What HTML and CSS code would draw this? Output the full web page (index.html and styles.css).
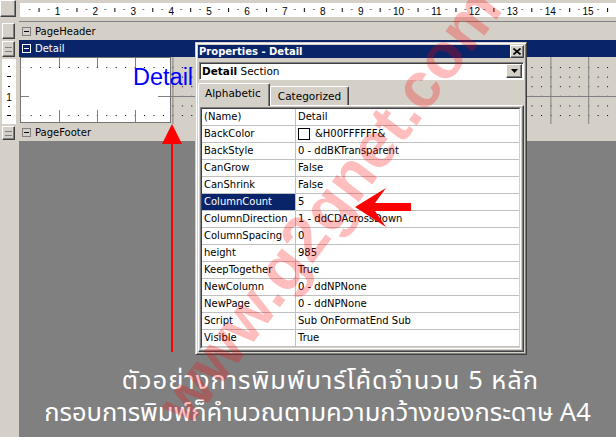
FILE: index.html
```html
<!DOCTYPE html>
<html lang="th">
<head>
  <meta charset="UTF-8" />
  <title>Report Designer - Properties</title>
  <link rel="stylesheet" href="styles.css">
</head>
<body>

<!-- ruler row -->
<div class="top">
  <div class="corner raised"></div>
  <div class="hruler">
    <svg width="596" height="14" viewBox="0 0 596 14">
      <defs>
        <pattern id="rtick" patternUnits="userSpaceOnUse" x="-0.4" y="0" width="37.9" height="14">
          <rect x="9.5" y="6" width="1" height="1" fill="#000"/>
          <rect x="19" y="5" width="1" height="4" fill="#000"/>
          <rect x="28.4" y="6" width="1" height="1" fill="#000"/>
        </pattern>
      </defs>
      <rect x="0" y="0" width="596" height="14" fill="url(#rtick)"/>
      <g class="rnum">
        <text x="37.5" y="11.5">1</text>
        <text x="75.4" y="11.5">2</text>
        <text x="113.3" y="11.5">3</text>
        <text x="151.2" y="11.5">4</text>
        <text x="189.1" y="11.5">5</text>
        <text x="227" y="11.5">6</text>
        <text x="264.9" y="11.5">7</text>
        <text x="302.8" y="11.5">8</text>
        <text x="340.7" y="11.5">9</text>
        <text x="378.6" y="11.5">10</text>
        <text x="416.5" y="11.5">11</text>
        <text x="454.4" y="11.5">12</text>
        <text x="492.3" y="11.5">13</text>
        <text x="530.2" y="11.5">14</text>
        <text x="568.1" y="11.5">15</text>
      </g>
    </svg>
  </div>
</div>

<div class="body">
  <!-- left section handles -->
  <div class="side">
    <div class="sbtn raised"></div>
    <div class="sbtn raised grip"></div>
    <div class="vruler">
      <svg width="14" height="65" viewBox="0 0 14 65">
        <rect x="6" y="7" width="2" height="1" fill="#000"/>
        <rect x="5" y="17" width="4" height="1" fill="#000"/>
        <rect x="6" y="27" width="2" height="1" fill="#000"/>
        <text x="7" y="42" class="rnum">1</text>
        <rect x="6" y="47" width="2" height="1" fill="#000"/>
        <rect x="5" y="56" width="4" height="1" fill="#000"/>
      </svg>
    </div>
    <div class="sbtn raised grip short"></div>
  </div>

  <div class="main">
    <div class="band">
      <span class="fold"></span>PageHeader
    </div>
    <div class="band band-sel">
      <span class="fold"></span>Detail
    </div>

    <!-- detail section design surface -->
    <div class="surface">
      <svg width="597" height="67" viewBox="0 0 597 67">
        <defs>
          <pattern id="dots" patternUnits="userSpaceOnUse" x="2.2" y="0.4" width="9.45" height="9.6">
            <rect x="0" y="0" width="1" height="1" fill="#000"/>
          </pattern>
        </defs>
        <rect x="152" y="5" width="445" height="62" fill="url(#dots)"/>
        <g stroke="#808080" stroke-width="1">
          <line x1="152" y1="39.5" x2="597" y2="39.5"/>
          <line x1="153.9" y1="0" x2="153.9" y2="67"/>
          <line x1="191.7" y1="0" x2="191.7" y2="67"/>
          <line x1="229.5" y1="0" x2="229.5" y2="67"/>
          <line x1="267.3" y1="0" x2="267.3" y2="67"/>
          <line x1="305.1" y1="0" x2="305.1" y2="67"/>
          <line x1="342.9" y1="0" x2="342.9" y2="67"/>
          <line x1="380.7" y1="0" x2="380.7" y2="67"/>
          <line x1="418.5" y1="0" x2="418.5" y2="67"/>
          <line x1="456.3" y1="0" x2="456.3" y2="67"/>
          <line x1="494.1" y1="0" x2="494.1" y2="67"/>
          <line x1="531.9" y1="0" x2="531.9" y2="67"/>
          <line x1="569.7" y1="0" x2="569.7" y2="67"/>
        </g>

        <!-- selected white control -->
        <rect x="1.5" y="0.5" width="150" height="65" fill="#fff" stroke="#000" stroke-dasharray="1 1"/>
        <rect x="3" y="8" width="148" height="4" fill="url(#dots)"/>
        <rect x="3" y="56" width="148" height="4" fill="url(#dots)"/>
        <g stroke="#808080" stroke-width="1">
          <line x1="40.5" y1="1" x2="40.5" y2="10"/>
          <line x1="78.5" y1="1" x2="78.5" y2="10"/>
          <line x1="116.5" y1="1" x2="116.5" y2="10"/>
          <line x1="40.5" y1="53" x2="40.5" y2="65"/>
          <line x1="78.5" y1="53" x2="78.5" y2="65"/>
          <line x1="116.5" y1="53" x2="116.5" y2="65"/>
          <line x1="2" y1="39.5" x2="10" y2="39.5"/>
          <line x1="139" y1="39.5" x2="151" y2="39.5"/>
        </g>
        <text x="114" y="28" class="big-label">Detail</text>
      </svg>
    </div>

    <div class="band">
      <span class="fold"></span>PageFooter
    </div>

    <div class="stage">
      <p class="cap1">ตัวอย่างการพิมพ์บาร์โค้ดจำนวน 5 หลัก</p>
      <p>กรอบการพิมพ์ก็คำนวณตามความกว้างของกระดาษ A4</p>
    </div>
  </div>
</div>

<!-- floating properties window -->
<div class="props">
  <div class="title">
    <span>Properties - Detail</span>
    <span class="close raised">
      <svg width="8" height="7" viewBox="0 0 8 7"><path d="M0.5 0.5 L7.5 6.5 M7.5 0.5 L0.5 6.5" stroke="#000" stroke-width="1.6"/></svg>
    </span>
  </div>

  <div class="combo">
    <span class="combo-text"><b>Detail</b> Section</span>
    <span class="drop raised">
      <svg width="7" height="4" viewBox="0 0 7 4"><path d="M0 0 H7 L3.5 4 Z" fill="#000"/></svg>
    </span>
  </div>

  <div class="tabs">
    <span class="tab tab-on">Alphabetic</span>
    <span class="tab">Categorized</span>
  </div>

  <div class="page">
    <div class="grid">
      <div class="grid-in">
        <div class="row"><span class="k">(Name)</span><span class="v">Detail</span></div>
        <div class="row"><span class="k">BackColor</span><span class="v"><i class="swatch"></i>&amp;H00FFFFFF&amp;</span></div>
        <div class="row"><span class="k">BackStyle</span><span class="v">0 - ddBKTransparent</span></div>
        <div class="row"><span class="k">CanGrow</span><span class="v">False</span></div>
        <div class="row"><span class="k">CanShrink</span><span class="v">False</span></div>
        <div class="row row-sel"><span class="k">ColumnCount</span><span class="v">5</span></div>
        <div class="row"><span class="k">ColumnDirection</span><span class="v">1 - ddCDAcrossDown</span></div>
        <div class="row"><span class="k">ColumnSpacing</span><span class="v">0</span></div>
        <div class="row"><span class="k">height</span><span class="v">985</span></div>
        <div class="row"><span class="k">KeepTogether</span><span class="v">True</span></div>
        <div class="row"><span class="k">NewColumn</span><span class="v">0 - ddNPNone</span></div>
        <div class="row"><span class="k">NewPage</span><span class="v">0 - ddNPNone</span></div>
        <div class="row"><span class="k">Script</span><span class="v">Sub OnFormatEnd Sub</span></div>
        <div class="row"><span class="k">Visible</span><span class="v">True</span></div>
      </div>
    </div>
  </div>
</div>

<!-- annotations drawn over the screenshot -->
<svg class="overlay" width="616" height="437" viewBox="0 0 616 437">
  <line x1="172" y1="140" x2="172" y2="352" stroke="#ff0000" stroke-width="2"/>
  <polygon points="172,124 162,144 182,144" fill="#ff0000"/>
  <polygon points="355,207 386,188 375,203 411,203 411,211 375,211 386,227" fill="#ff0000"/>
  <text x="328" y="228" class="mark" transform="rotate(-53 328 205)">www.g2gnet.com</text>
</svg>

</body>
</html>
```

FILE: styles.css
```css
* {
  box-sizing: border-box;
}

body {
  margin: 0;
  width: 616px;
  height: 437px;
  overflow: hidden;
  position: relative;
  background: #d4d0c8;
  font-family: "DejaVu Sans", sans-serif;
  font-size: 10px;
  color: #000;
}

svg {
  display: block;
}

.raised {
  background: #d4d0c8;
  border: 1px solid;
  border-color: #fff #404040 #404040 #fff;
  box-shadow: inset -1px -1px #808080;
}

/* top ruler */
.top {
  display: flex;
  height: 21px;
}

.corner {
  width: 16px;
  height: 17px;
}

.hruler {
  flex: 1;
  margin: 3px 0 0 4px;
  height: 14px;
  background: #fff;
}

.rnum {
  font-family: "Liberation Sans", sans-serif;
  font-size: 10px;
  text-anchor: middle;
  fill: #000;
}

/* body: side handles + sections */
.body {
  display: flex;
  height: 416px;
}

.side {
  width: 19px;
  padding: 2px 0 0 2px;
  display: flex;
  flex-direction: column;
  gap: 2px;
}

.sbtn {
  width: 13px;
  height: 16px;
  position: relative;
}

.sbtn.short {
  height: 14px;
}

.grip::before {
  content: "";
  position: absolute;
  left: 2px;
  top: 5px;
  width: 7px;
  height: 3px;
  border-top: 1px solid #808080;
  border-bottom: 1px solid #808080;
}

.sbtn.short.grip::before {
  top: 4px;
}

.vruler {
  width: 14px;
  height: 65px;
  background: #fff;
}

.main {
  flex: 1;
  display: flex;
  flex-direction: column;
  border-top: 1px solid #808080;
  background: #808080;
}

.band {
  height: 17px;
  display: flex;
  align-items: center;
  gap: 4px;
  padding-left: 3px;
  background: #d4d0c8;
  font-size: 10px;
}

.band:first-child {
  height: 18px;
}

.band-sel {
  background: #0a246a;
  color: #fff;
}

.fold {
  width: 9px;
  height: 9px;
  border: 1px solid #808080;
  position: relative;
}

.fold::after {
  content: "";
  position: absolute;
  left: 1px;
  top: 3px;
  width: 5px;
  height: 1px;
  background: #000;
}

.band-sel .fold {
  border-color: #fff;
}

.band-sel .fold::after {
  background: #fff;
}

.surface {
  height: 67px;
  background: #d4d0c8;
}

.big-label {
  font-family: "Liberation Sans", Arial, sans-serif;
  font-size: 23.5px;
  fill: #0000ff;
}

.stage {
  flex: 1;
  display: flex;
  flex-direction: column;
  justify-content: flex-end;
  padding-bottom: 8px;
  color: #fff;
  text-align: center;
  font-family: "Noto Sans Thai", "Noto Sans", "Liberation Sans", sans-serif;
  font-size: 25.5px;
}

.stage p {
  margin: 0;
  line-height: 32px;
}

.stage .cap1 {
  padding-left: 26px;
  letter-spacing: 1px;
}

/* properties window */
.props {
  position: absolute;
  left: 195px;
  top: 42px;
  width: 332px;
  height: 313px;
  display: flex;
  flex-direction: column;
  padding: 2px;
  background: #d4d0c8;
  border: 1px solid;
  border-color: #d4d0c8 #404040 #404040 #d4d0c8;
  box-shadow: inset 1px 1px #fff, inset -1px -1px #808080;
}

.title {
  height: 18px;
  display: flex;
  align-items: center;
  justify-content: space-between;
  padding: 0 0 0 1px;
  background: #0a246a;
  color: #fff;
  font-weight: bold;
}

.close {
  width: 14px;
  height: 13px;
  display: flex;
  align-items: center;
  justify-content: center;
}

.combo {
  margin: 4px 0 0 1px;
  height: 18px;
  display: flex;
  align-items: center;
  justify-content: space-between;
  background: #fff;
  border: 1px solid;
  border-color: #808080 #fff #fff #808080;
  box-shadow: inset 1px 1px #404040;
  padding: 1px 1px 1px 2px;
}

.combo-text {
  font-size: 10.5px;
}

.drop {
  width: 16px;
  height: 14px;
  display: flex;
  align-items: center;
  justify-content: center;
}

.tabs {
  margin-top: 3px;
  height: 22px;
  display: flex;
  align-items: flex-end;
  position: relative;
  z-index: 1;
}

.tab {
  height: 19px;
  padding: 3px 7px 0;
  border: 1px solid;
  border-bottom: none;
  border-color: #fff #404040 #404040 #fff;
  border-radius: 2px 2px 0 0;
  box-shadow: inset -1px 0 #808080;
  font-size: 10.5px;
}

.tab-on {
  height: 23px;
  margin-bottom: -1px;
  padding: 3px 8px 0 6px;
  background: #d4d0c8;
}

.page {
  flex: 1;
  padding: 1px 2px 2px 1px;
  border: 1px solid;
  border-color: #fff #404040 #404040 #fff;
  box-shadow: inset -1px -1px #808080;
  display: flex;
}

.grid {
  flex: 1;
  display: flex;
  border: 1px solid;
  border-color: #808080 #fff #fff #808080;
}

.grid-in {
  flex: 1;
  background: #fff;
  border: 1px solid;
  border-color: #404040 #d4d0c8 #d4d0c8 #404040;
}

.row {
  display: flex;
  height: 17px;
  border-bottom: 1px solid #c0c0c0;
  line-height: 16px;
}

.k {
  width: 94px;
  padding-left: 2px;
  border-right: 1px solid #c0c0c0;
  white-space: nowrap;
}

.v {
  flex: 1;
  padding-left: 2px;
  display: flex;
  align-items: center;
  white-space: nowrap;
}

.row-sel .k {
  background: #0a246a;
  color: #fff;
}

.swatch {
  width: 12px;
  height: 12px;
  border: 1px solid #000;
  background: #fff;
  margin-right: 5px;
}

/* annotation layer */
.overlay {
  position: absolute;
  left: 0;
  top: 0;
  pointer-events: none;
}

.mark {
  font-family: "Liberation Sans", Arial, sans-serif;
  font-weight: bold;
  font-size: 64px;
  text-anchor: middle;
  fill: #ff0000;
  fill-opacity: 0.26;
}
```
